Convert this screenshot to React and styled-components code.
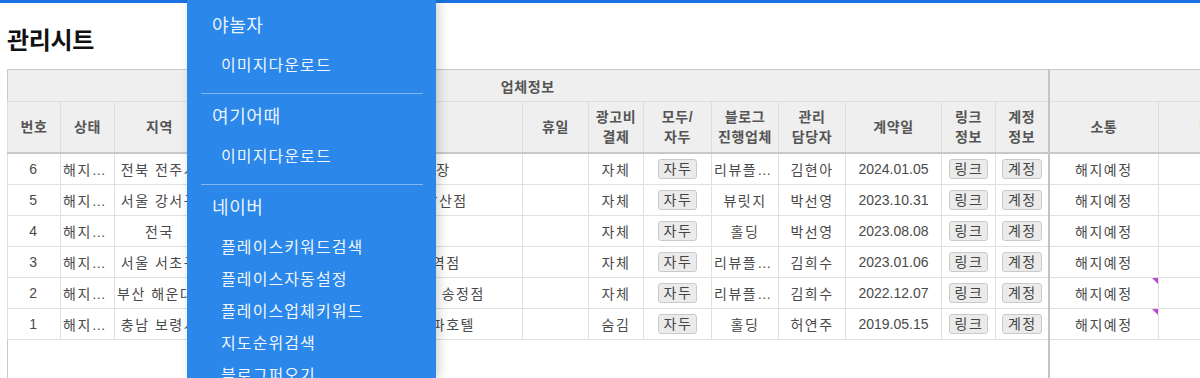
import React from 'react';
import styled, { createGlobalStyle } from 'styled-components';

const GlobalStyle = createGlobalStyle`
	html, body {
		margin: 0;
		padding: 0;
		overflow: hidden;
		background: #fff;
	}
	body {
		font-family: "Noto Sans CJK KR", "Noto Sans", sans-serif;
		color: #444;
	}
`;

const columns = [
	{ key: 'no', label: ['번호'], width: 53 },
	{ key: 'status', label: ['상태'], width: 54 },
	{ key: 'region', label: ['지역'], width: 90, clip: true },
	{ key: 'name', label: ['업체명'], width: 318 },
	{ key: 'holiday', label: ['휴일'], width: 66 },
	{ key: 'pay', label: ['광고비', '결제'], width: 55 },
	{ key: 'modu', label: ['모두/', '자두'], width: 68, button: true },
	{ key: 'blog', label: ['블로그', '진행업체'], width: 67 },
	{ key: 'manager', label: ['관리', '담당자'], width: 67 },
	{ key: 'date', label: ['계약일'], width: 96, plain: true },
	{ key: 'link', label: ['링크', '정보'], width: 54, button: true },
	{ key: 'account', label: ['계정', '정보'], width: 53, button: true, groupEnd: true },
	{ key: 'talk', label: ['소통'], width: 110, marker: true },
	{ key: 'memo', label: ['메모'], width: 108 },
	{ key: 'etc', label: ['비고'], width: 200 },
];

const rows = [
	{ no: 6, status: '해지예정', region: '전북 전주시', name: '전주 한옥마을 스테이 본장', pay: '자체', modu: '자두', blog: '리뷰플러스', manager: '김현아', date: '2024.01.05', link: '링크', account: '계정', talk: '해지예정' },
	{ no: 5, status: '해지예정', region: '서울 강서구', name: '강서 마곡 비즈니스 호텔 발산점', pay: '자체', modu: '자두', blog: '뷰릿지', manager: '박선영', date: '2023.10.31', link: '링크', account: '계정', talk: '해지예정' },
	{ no: 4, status: '해지예정', region: '전국', name: '스테이 브랜드 본사', pay: '자체', modu: '자두', blog: '홀딩', manager: '박선영', date: '2023.08.08', link: '링크', account: '계정', talk: '해지예정' },
	{ no: 3, status: '해지예정', region: '서울 서초구', name: '서초 호텔 더 스테이 교대역점', pay: '자체', modu: '자두', blog: '리뷰플러스', manager: '김희수', date: '2023.01.06', link: '링크', account: '계정', talk: '해지예정' },
	{ no: 2, status: '해지예정', region: '부산 해운대구', name: '해운대 오션뷰 호텔 앤 리조트 송정점', pay: '자체', modu: '자두', blog: '리뷰플러스', manager: '김희수', date: '2022.12.07', link: '링크', account: '계정', talk: '해지예정', note: true },
	{ no: 1, status: '해지예정', region: '충남 보령시', name: '보령 대천 해수욕장 오션 스파호텔', pay: '숨김', modu: '자두', blog: '홀딩', manager: '허연주', date: '2019.05.15', link: '링크', account: '계정', talk: '해지예정', note: true },
];

const menu = [
	{ title: '야놀자', items: ['이미지다운로드'] },
	{ title: '여기어때', items: ['이미지다운로드'] },
	{ title: '네이버', items: ['플레이스키워드검색', '플레이스자동설정', '플레이스업체키워드', '지도순위검색', '블로그퍼오기'] },
];

const groupEndIndex = columns.findIndex((c) => c.groupEnd);

const App = () => {
	return (
		<Page>
			<GlobalStyle />
			<TopBar />
			<Content>
				<Title>관리시트</Title>
				<Sheet>
					<colgroup>
						{columns.map((c) => (
							<col key={c.key} style={{ width: c.width }} />
						))}
					</colgroup>
					<thead>
						<tr>
							<GroupCell colSpan={groupEndIndex + 1} $divider>
								업체정보
							</GroupCell>
							<GroupCell colSpan={columns.length - groupEndIndex - 1}>관리정보</GroupCell>
						</tr>
						<tr>
							{columns.map((c) => (
								<HeadCell key={c.key} $divider={c.groupEnd}>
									{c.label.map((line) => (
										<div key={line}>{line}</div>
									))}
								</HeadCell>
							))}
						</tr>
					</thead>
					<tbody>
						{rows.map((r) => (
							<tr key={r.no}>
								{columns.map((c) => (
									<Cell key={c.key} $divider={c.groupEnd} $plain={c.plain} $clip={c.clip}>
										{c.button ? <MiniButton>{r[c.key]}</MiniButton> : r[c.key]}
										{c.marker && r.note && <NoteMark />}
									</Cell>
								))}
							</tr>
						))}
						<tr>
							<FillCell colSpan={groupEndIndex + 1} $divider />
							<FillCell colSpan={columns.length - groupEndIndex - 1} />
						</tr>
					</tbody>
				</Sheet>
			</Content>
			<SideMenu>
				{menu.map((group, i) => (
					<MenuGroup key={group.title} $last={i === menu.length - 1}>
						<MenuTitle>{group.title}</MenuTitle>
						<MenuList>
							{group.items.map((item) => (
								<MenuItem key={item}>{item}</MenuItem>
							))}
						</MenuList>
					</MenuGroup>
				))}
			</SideMenu>
		</Page>
	);
};

export default App;

const Page = styled.div`
	position: relative;
	width: 1200px;
	height: 378px;
	overflow: hidden;
`;

const TopBar = styled.div`
	height: 3px;
	background: #1a73e0;
`;

const Content = styled.div`
	padding-left: 7px;
	width: 1400px;
`;

const Title = styled.h1`
	margin: 0 0 20px;
	padding-top: 20px;
	height: 46px;
	box-sizing: border-box;
	font-size: 24px;
	line-height: 32px;
	font-weight: 700;
	color: #111;
	letter-spacing: -0.3px;
`;

const Sheet = styled.table`
	table-layout: fixed;
	border-collapse: collapse;
	width: 1264px;
	border: 1px solid #c8c8c8;
	font-family: "Liberation Sans", "Noto Sans CJK KR", sans-serif;
	font-size: 14px;
	color: #4a4a4a;
`;

const GroupCell = styled.th`
	height: 31px;
	padding: 0;
	background: #efefef;
	border-bottom: 1px solid #dedede;
	border-right: ${(p) => (p.$divider ? '2px solid #c4c4c4' : '1px solid #dedede')};
	font-weight: 700;
	color: #555;
	text-align: center;
	vertical-align: middle;
	letter-spacing: 0.6px;
`;

const HeadCell = styled.th`
	height: 50px;
	padding: 0 2px;
	background: #efefef;
	border-left: 1px solid #dedede;
	border-right: ${(p) => (p.$divider ? '2px solid #c4c4c4' : '1px solid #dedede')};
	border-bottom: 2px solid #c8c8c8;
	font-weight: 700;
	color: #555;
	line-height: 20px;
	text-align: center;
	vertical-align: middle;
	white-space: nowrap;
	letter-spacing: 0.6px;
`;

const Cell = styled.td`
	position: relative;
	height: 30px;
	padding: 0 2px;
	border: 1px solid #e0e0e0;
	border-right: ${(p) => (p.$divider ? '2px solid #c4c4c4' : '1px solid #e0e0e0')};
	text-align: center;
	vertical-align: middle;
	white-space: nowrap;
	overflow: hidden;
	text-overflow: ${(p) => (p.$clip ? 'clip' : 'ellipsis')};
	letter-spacing: ${(p) => (p.$plain ? '0' : '1.5px')};
`;

const FillCell = styled.td`
	height: 60px;
	padding: 0;
	border-right: ${(p) => (p.$divider ? '2px solid #c4c4c4' : 'none')};
`;

const MiniButton = styled.span`
	display: inline-block;
	box-sizing: border-box;
	height: 20px;
	padding: 0 4px 0 5px;
	line-height: 18px;
	border: 1px solid #cacaca;
	border-radius: 3px;
	background: #ebebeb;
	color: #444;
	vertical-align: middle;
`;

const NoteMark = styled.span`
	position: absolute;
	top: 0;
	right: 0;
	width: 0;
	height: 0;
	border-top: 6px solid #b946d6;
	border-left: 6px solid transparent;
`;

const SideMenu = styled.nav`
	position: absolute;
	top: 0;
	left: 187px;
	width: 249px;
	height: 100%;
	padding-top: 3px;
	box-sizing: border-box;
	background: #2b88ea;
	box-shadow: 3px 0 10px rgba(0, 0, 0, 0.18);
	color: #fff;
`;

const MenuGroup = styled.div`
	padding: 5px 0 ${(p) => (p.$last ? '0' : '13px')};
	margin: 0 13px 0 14px;
	border-bottom: ${(p) => (p.$last ? 'none' : '1px solid rgba(255, 255, 255, 0.4)')};
`;

const MenuTitle = styled.div`
	padding-left: 11px;
	line-height: 32px;
	font-size: 18px;
	letter-spacing: 0.6px;
	color: rgba(255, 255, 255, 0.92);
`;

const MenuList = styled.div`
	margin-top: 8px;
	display: flex;
	flex-direction: column;
`;

const MenuItem = styled.div`
	padding-left: 20px;
	line-height: 32px;
	font-size: 16px;
	letter-spacing: 1.1px;
	color: rgba(255, 255, 255, 0.95);
	white-space: nowrap;
`;
